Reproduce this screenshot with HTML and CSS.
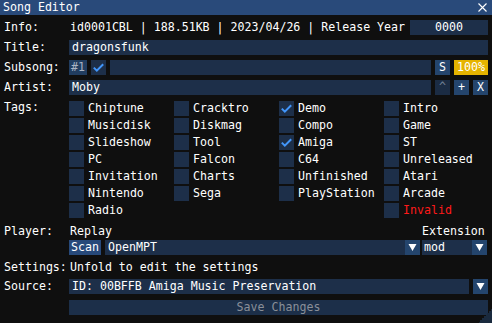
FILE: index.html
```html
<!DOCTYPE html>
<html>
<head>
<meta charset="utf-8">
<link rel="stylesheet" href="styles.css">
</head>
<body>
<div class="win">
  <div class="titlebar">
    <span class="ttl">Song Editor</span>
    <svg class="close" width="9" height="9" viewBox="0 0 9 9"><path d="M0.5 0.5 L8.5 8.5 M8.5 0.5 L0.5 8.5" stroke="#fff" stroke-width="1.1" fill="none"/></svg>
  </div>
  <div class="content">
    <div class="row r-info">
      <div class="label">Info:</div>
      <div class="info">id0001CBL | 188.51KB | 2023/04/26 | Release Year</div>
      <div class="frame year">0000</div>
    </div>
    <div class="row r-gap5">
      <div class="label">Title:</div>
      <div class="frame grow">dragonsfunk</div>
    </div>
    <div class="row r-gap5">
      <div class="label">Subsong:</div>
      <div class="btn num">#1</div>
      <div class="check"><svg width="15" height="15" viewBox="0 0 15 15"><path d="M2.8 7.6 L5.8 10.6 L12.2 4.2" stroke="#4296fa" stroke-width="2" fill="none"/></svg></div>
      <div class="frame grow"></div>
      <div class="btn sq">S</div>
      <div class="pct">100%</div>
    </div>
    <div class="row r-gap5">
      <div class="label">Artist:</div>
      <div class="frame grow">Moby</div>
      <div class="btn sq disabled">^</div>
      <div class="btn sq">+</div>
      <div class="btn sq">X</div>
    </div>
    <div class="row r-tags">
      <div class="label">Tags:</div>
      <div class="tags">
        <div class="tag"><span class="check"></span><span>Chiptune</span></div>
        <div class="tag"><span class="check"></span><span>Cracktro</span></div>
        <div class="tag"><span class="check"><svg width="15" height="15" viewBox="0 0 15 15"><path d="M2.8 7.6 L5.8 10.6 L12.2 4.2" stroke="#4296fa" stroke-width="2" fill="none"/></svg></span><span>Demo</span></div>
        <div class="tag"><span class="check"></span><span>Intro</span></div>

        <div class="tag"><span class="check"></span><span>Musicdisk</span></div>
        <div class="tag"><span class="check"></span><span>Diskmag</span></div>
        <div class="tag"><span class="check"></span><span>Compo</span></div>
        <div class="tag"><span class="check"></span><span>Game</span></div>

        <div class="tag"><span class="check"></span><span>Slideshow</span></div>
        <div class="tag"><span class="check"></span><span>Tool</span></div>
        <div class="tag"><span class="check"><svg width="15" height="15" viewBox="0 0 15 15"><path d="M2.8 7.6 L5.8 10.6 L12.2 4.2" stroke="#4296fa" stroke-width="2" fill="none"/></svg></span><span>Amiga</span></div>
        <div class="tag"><span class="check"></span><span>ST</span></div>

        <div class="tag"><span class="check"></span><span>PC</span></div>
        <div class="tag"><span class="check"></span><span>Falcon</span></div>
        <div class="tag"><span class="check"></span><span>C64</span></div>
        <div class="tag"><span class="check"></span><span>Unreleased</span></div>

        <div class="tag"><span class="check"></span><span>Invitation</span></div>
        <div class="tag"><span class="check"></span><span>Charts</span></div>
        <div class="tag"><span class="check"></span><span>Unfinished</span></div>
        <div class="tag"><span class="check"></span><span>Atari</span></div>

        <div class="tag"><span class="check"></span><span>Nintendo</span></div>
        <div class="tag"><span class="check"></span><span>Sega</span></div>
        <div class="tag"><span class="check"></span><span>PlayStation</span></div>
        <div class="tag"><span class="check"></span><span>Arcade</span></div>

        <div class="tag"><span class="check"></span><span>Radio</span></div>
        <div class="tag empty"></div>
        <div class="tag empty"></div>
        <div class="tag"><span class="check"></span><span class="invalid">Invalid</span></div>
      </div>
    </div>
    <div class="row line r-player">
      <div class="label">Player:</div>
      <div class="pl">
        <div class="pl-left txt">Replay</div>
        <div class="pl-right txt">Extension</div>
      </div>
    </div>
    <div class="row r-scan">
      <div class="label"></div>
      <div class="pl">
        <div class="pl-left flexrow">
          <div class="btn scan">Scan</div>
          <div class="frame combo grow"><span class="ctext">OpenMPT</span><span class="arrow"><svg width="15" height="15" viewBox="0 0 15 15"><path d="M3.5 4 L11.5 4 L7.5 11 Z" fill="#fff"/></svg></span></div>
        </div>
        <div class="pl-right">
          <div class="frame combo ext"><span class="ctext">mod</span><span class="arrow"><svg width="15" height="15" viewBox="0 0 15 15"><path d="M3.5 4 L11.5 4 L7.5 11 Z" fill="#fff"/></svg></span></div>
        </div>
      </div>
    </div>
    <div class="row line r-settings">
      <div class="label">Settings:</div>
      <div class="txt">Unfold to edit the settings</div>
    </div>
    <div class="row r-gap5">
      <div class="label">Source:</div>
      <div class="frame grow">ID: 00BFFB Amiga Music Preservation</div>
      <div class="btn sq arrowbtn"><svg width="15" height="15" viewBox="0 0 15 15"><path d="M3.5 4 L11.5 4 L7.5 11 Z" fill="#fff"/></svg></div>
    </div>
    <div class="row r-save">
      <div class="label"></div>
      <div class="btn save">Save Changes</div>
    </div>
  </div>
  <div class="grip"></div>
</div>
</body>
</html>
```

FILE: styles.css
```css
html, body {
  margin: 0;
  padding: 0;
  background: #0f0f0f;
}
body {
  font-family: "DejaVu Sans Mono", "Liberation Mono", monospace;
  font-size: 11.6px;
  line-height: 13px;
  color: #ffffff;
}
.win {
  position: relative;
  width: 492px;
  height: 323px;
  background: #0f0f0f;
  overflow: hidden;
}
.titlebar {
  height: 15px;
  box-sizing: border-box;
  padding: 1px 5px 0 3px;
  background: #294a7a;
  display: flex;
  align-items: flex-start;
}
.ttl {
  white-space: nowrap;
}
.close {
  margin-left: auto;
  margin-top: 2px;
}
.content {
  padding: 5px 4px 0 4px;
}
.row {
  display: flex;
  gap: 4px;
  height: 15px;
}
.row.line {
  height: 13px;
}
.r-gap5 { margin-top: 5px; }
.r-tags { margin-top: 6px; height: auto; }
.r-player { margin-top: 7px; }
.r-scan { margin-top: 2px; }
.r-settings { margin-top: 6px; }
.r-save { margin-top: 6px; }

.label {
  width: 61px;
  flex: none;
  white-space: nowrap;
  padding-top: 1px;
}
.line .label { padding-top: 0; }
.r-tags .label { padding-top: 0; }
.info {
  padding: 1px 0 0 1px;
  white-space: nowrap;
}
.txt {
  padding-left: 1px;
  white-space: nowrap;
}
.frame {
  box-sizing: border-box;
  height: 15px;
  background: #1d2f49;
  padding: 1px 3px;
  white-space: nowrap;
  overflow: hidden;
}
.grow { flex: 1; min-width: 0; }
.year {
  width: 78px;
  margin-left: auto;
  text-align: center;
}
.btn {
  box-sizing: border-box;
  height: 15px;
  background: #24456d;
  padding-top: 1px;
  text-align: center;
  white-space: nowrap;
  flex: none;
}
.btn.sq { width: 15px; }
.btn.num {
  width: 18px;
  background: #213d60;
  color: #aab4c4;
}
.btn.disabled {
  background: #1b2c44;
  color: #738196;
}
.check {
  display: block;
  width: 15px;
  height: 15px;
  background: #1d2f49;
  flex: none;
}
.check svg { display: block; }
.pct {
  width: 34px;
  height: 15px;
  box-sizing: border-box;
  padding-top: 1px;
  background: #e6b400;
  color: #ffffff;
  text-align: center;
  flex: none;
}
.tags {
  display: grid;
  grid-template-columns: repeat(4, 105px);
  grid-auto-rows: 15px;
  row-gap: 2px;
}
.tag {
  display: flex;
  gap: 4px;
  height: 15px;
  white-space: nowrap;
}
.tag span:last-child:not(.check) {
  padding-top: 1px;
}
.invalid { color: #ff1a1a; }

.pl {
  flex: 1;
  display: flex;
  gap: 2px;
}
.pl-left { flex: 1; min-width: 0; }
.pl-right { width: 66px; flex: none; }
.flexrow {
  display: flex;
  gap: 4px;
}
.btn.scan {
  width: 32px;
  background: #27497a;
}
.combo {
  display: flex;
  padding: 0;
}
.ctext {
  flex: 1;
  padding: 1px 0 0 3px;
}
.ext .ctext { padding-left: 2px; }
.ext { width: 65px; }
.arrow {
  width: 15px;
  height: 15px;
  background: #24456d;
  flex: none;
}
.arrow svg, .arrowbtn svg { display: block; }
.arrowbtn { padding-top: 0; }
.btn.save {
  flex: 1;
  min-width: 0;
  background: #1c2f49;
  color: #8a9099;
}
.grip {
  position: absolute;
  right: 0;
  bottom: 0;
  width: 14px;
  height: 14px;
  background: linear-gradient(to bottom right, transparent 50%, #1a2a3e 50%);
}
```
